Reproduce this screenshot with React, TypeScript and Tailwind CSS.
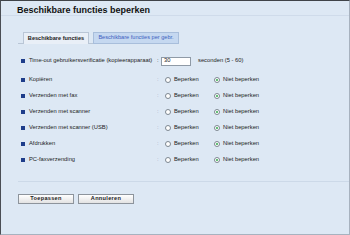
import React from "react";

const rows = [
  "Kopiëren",
  "Verzenden met fax",
  "Verzenden met scanner",
  "Verzenden met scanner (USB)",
  "Afdrukken",
  "PC-faxverzending",
];

function Bullet() {
  return <span className="inline-block w-[4px] h-[4px] bg-[#1e3d8a] mr-[4px] shrink-0" />;
}

function Radio({ on }: { on?: boolean }) {
  return (
    <span className="inline-flex items-center justify-center w-[6px] h-[6px] rounded-full border border-[#7d8791] bg-white shrink-0">
      {on && <span className="w-[2px] h-[2px] rounded-full bg-[#2fa84a]" />}
    </span>
  );
}

export default function App() {
  return (
    <div
      className="w-[350px] h-[235px] bg-[#dde8f4] border-t border-l border-t-[#3f4348] border-l-[#4a4e54] border-r border-b border-r-[#a7b2bf] border-b-[#a7b2bf] flex flex-col text-[#222]"
      style={{ fontFamily: '"Liberation Sans", Arial, sans-serif' }}
    >
      <div className="pl-[16px] pt-[5px] h-[14px] text-[9px] font-bold leading-none text-[#111]">
        Beschikbare functies beperken
      </div>
      <div className="h-px bg-[#cfdbea]" />
      <div className="flex items-end pl-[17px] pt-[16px]">
        <div className="w-[5px] border-b border-[#b9c6d6]" />
        <div className="h-[12px] w-[66px] flex items-center justify-center border border-b-0 border-[#b9c6d6] bg-[#e9eff7] text-[5.6px] font-bold leading-none">
          Beschikbare functies
        </div>
        <div className="w-[4px] border-b border-[#b9c6d6]" />
        <div className="h-[12px] w-[86px] flex items-center justify-center border border-[#a8bedb] bg-[#c5d8f0] text-[5.6px] text-[#3d5fc0] leading-none">
          Beschikbare functies per gebr.
        </div>
      </div>
      <div className="pl-[20px] pt-[12px] text-[5.8px] leading-none">
        <div className="flex items-center h-[10px]">
          <Bullet />
          <span className="w-[128px] whitespace-nowrap">Time-out gebruikersverificatie (kopieerapparaat)</span>
          <span className="w-[4px]">:</span>
          <span className="w-[30px] h-[9px] bg-white border border-[#8f9aa6] flex items-center pl-[2px]">30</span>
          <span className="ml-[7px]">seconden (5 - 60)</span>
        </div>
        <div className="flex flex-col gap-[6px] mt-[9px]">
          {rows.map((r) => (
            <div key={r} className="flex items-center h-[10px]">
              <Bullet />
              <span className="w-[128px]">{r}</span>
              <span className="w-[8px] text-[#9aa5b1]">:</span>
              <Radio />
              <span className="ml-[3px] w-[40px]">Beperken</span>
              <Radio on />
              <span className="ml-[3px]">Niet beperken</span>
            </div>
          ))}
        </div>
      </div>
      <div className="ml-[17px] mt-[16px] h-px bg-[#ccd9e8]" />
      <div className="flex gap-[4px] pl-[17px] pt-[12px]">
        <button className="w-[56px] h-[10px] border border-[#8d949c] bg-gradient-to-b from-white to-[#e3e3e3] text-[5.6px] font-bold leading-none tracking-[0.3px]">
          Toepassen
        </button>
        <button className="w-[56px] h-[10px] border border-[#8d949c] bg-gradient-to-b from-white to-[#e3e3e3] text-[5.6px] font-bold leading-none tracking-[0.3px]">
          Annuleren
        </button>
      </div>
    </div>
  );
}
